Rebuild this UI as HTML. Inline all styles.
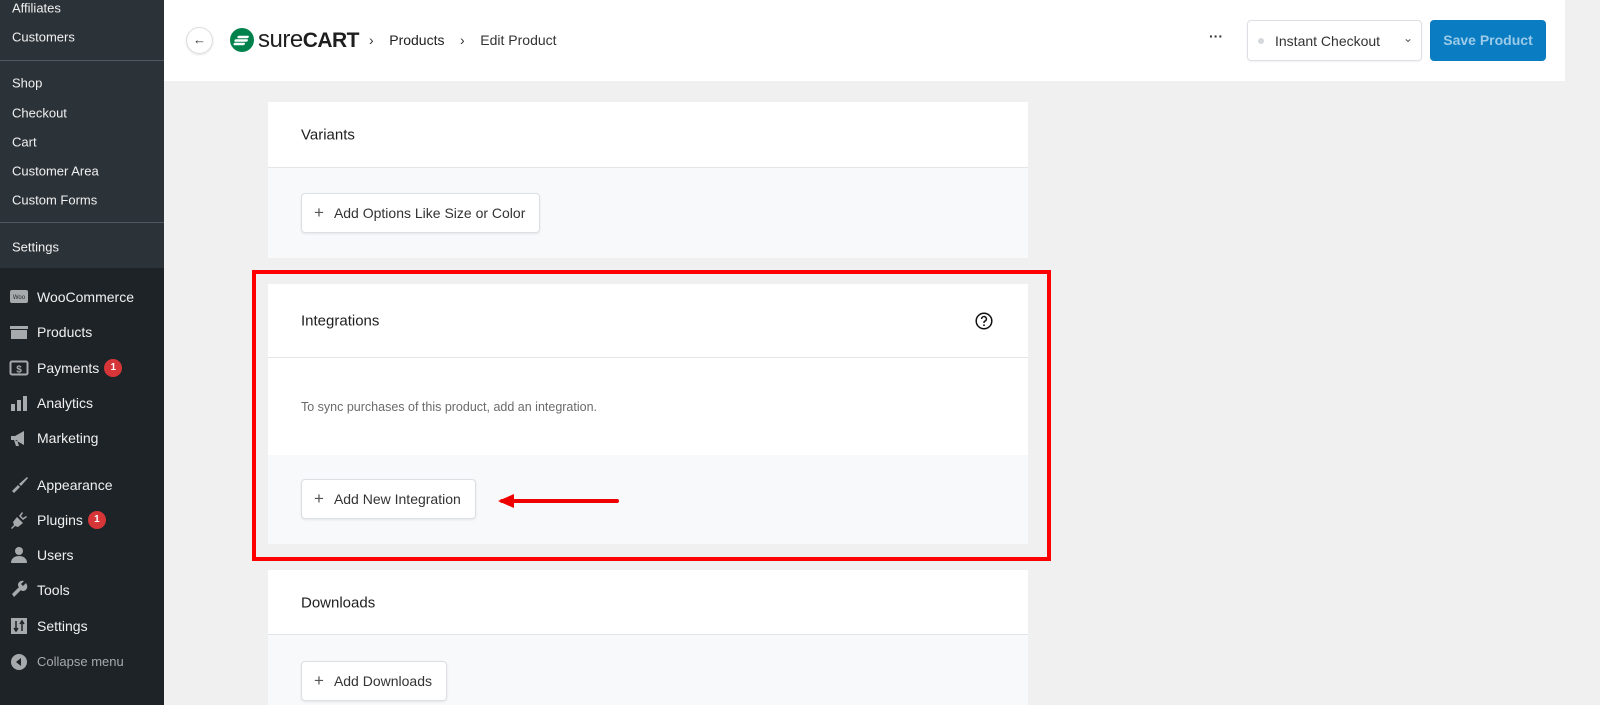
<!DOCTYPE html>
<html><head><meta charset="utf-8"><style>
*{box-sizing:border-box;margin:0;padding:0}
body{width:1600px;height:705px;overflow:hidden;background:#f0f0f1;font-family:"Liberation Sans",sans-serif;position:relative}
.sb{position:absolute;left:0;top:0;width:164px;height:705px;background:#1d2327}
.sbt{position:absolute;left:0;top:0;width:164px;height:268px;background:#2c3338}
.si{position:absolute;left:12px;font-size:13px;color:#f0f0f1;transform:translateY(-50%)}
.sep{position:absolute;left:0;width:164px;height:1px;background:#50575e}
.mi{position:absolute;left:37px;font-size:14px;color:#f0f0f1;transform:translateY(-50%);line-height:18px;display:flex;align-items:center}
.ic{position:absolute;left:9px;width:20px;height:20px;transform:translateY(-50%)}
.badge{display:inline-block;background:#d63638;color:#fff;border-radius:9px;font-size:10px;font-weight:bold;width:18px;height:18px;line-height:18px;text-align:center;margin-left:5px}
.hdr{position:absolute;left:164px;top:0;width:1401px;height:81px;background:#fff}
.card{position:absolute;left:268px;width:760px;background:#fff}
.ch{position:absolute;left:0;right:0;top:0;border-bottom:1px solid #e3e5e8}
.ct{position:absolute;left:33px;font-size:15px;color:#1e1e1e;transform:translateY(-50%)}
.grey{position:absolute;left:0;right:0;background:#f8f9fa}
.btn{position:absolute;left:33px;height:40px;background:#fff;border:1px solid #dcdfe3;border-radius:4px;box-shadow:0 1px 2px rgba(0,0,0,.08);font-size:14px;color:#333;line-height:38px;padding:0 14px 0 12px}
.btn b{font-weight:normal;font-size:17px;margin-right:10px;color:#555}
</style></head><body>
<div class="sb"><div class="sbt"></div>
<div class="si" style="top:8px">Affiliates</div>
<div class="si" style="top:37px">Customers</div>
<div class="sep" style="top:60px"></div>
<div class="si" style="top:83px">Shop</div>
<div class="si" style="top:113px">Checkout</div>
<div class="si" style="top:142px">Cart</div>
<div class="si" style="top:171px">Customer Area</div>
<div class="si" style="top:200px">Custom Forms</div>
<div class="sep" style="top:222px"></div>
<div class="si" style="top:247px">Settings</div>

<svg class="ic" style="top:297px" viewBox="0 0 20 20"><rect x="1" y="3" width="18" height="13" rx="2" fill="#a7aaad"/><text x="10" y="12" font-size="6" text-anchor="middle" fill="#1d2327" font-family="Liberation Sans">Woo</text></svg>
<div class="mi" style="top:297px">WooCommerce</div>
<svg class="ic" style="top:332px" viewBox="0 0 20 20"><rect x="1" y="4" width="18" height="3" fill="#a7aaad"/><rect x="2" y="8" width="16" height="9" fill="#a7aaad"/></svg>
<div class="mi" style="top:332px">Products</div>
<svg class="ic" style="top:368px" viewBox="0 0 20 20"><rect x="1.5" y="3.5" width="17" height="13" rx="1.5" fill="none" stroke="#a7aaad" stroke-width="2"/><text x="10" y="14.5" font-size="10" font-weight="bold" text-anchor="middle" fill="#a7aaad" font-family="Liberation Sans">$</text></svg>
<div class="mi" style="top:368px">Payments<span class="badge">1</span></div>
<svg class="ic" style="top:403px" viewBox="0 0 20 20"><rect x="2" y="11" width="4" height="7" fill="#a7aaad"/><rect x="8" y="7" width="4" height="11" fill="#a7aaad"/><rect x="14" y="3" width="4" height="15" fill="#a7aaad"/></svg>
<div class="mi" style="top:403px">Analytics</div>
<svg class="ic" style="top:438px" viewBox="0 0 20 20"><path d="M2 8h4l9-5v14l-9-5H2z M5 12l2 6h3l-2-6z" fill="#a7aaad"/></svg>
<div class="mi" style="top:438px">Marketing</div>
<svg class="ic" style="top:485px" viewBox="0 0 20 20"><path d="M18 2l-8 7 2 2 7-8z M9 10l-6 6 2 2 6-6z" fill="#a7aaad"/></svg>
<div class="mi" style="top:485px">Appearance</div>
<svg class="ic" style="top:520px" viewBox="0 0 20 20"><path d="M13 2l-3 4 4 4 4-3-1-1-3 2-2-2 2-3z M8 7l-4 5 1 3-3 3 1 1 3-3 3 1 5-4z" fill="#a7aaad"/></svg>
<div class="mi" style="top:520px">Plugins<span class="badge">1</span></div>
<svg class="ic" style="top:555px" viewBox="0 0 20 20"><circle cx="10" cy="6" r="4" fill="#a7aaad"/><path d="M2 18c0-5 4-7 8-7s8 2 8 7z" fill="#a7aaad"/></svg>
<div class="mi" style="top:555px">Users</div>
<svg class="ic" style="top:590px" viewBox="0 0 20 20"><path d="M17 3l-3 3-2-2 3-3c-3-1-6 1-6 4 0 1 0 1 1 2l-7 7 2 3 7-7c1 1 1 1 2 1 3 0 5-3 4-6z" fill="#a7aaad"/></svg>
<div class="mi" style="top:590px">Tools</div>
<svg class="ic" style="top:626px" viewBox="0 0 20 20"><rect x="2" y="2" width="16" height="16" fill="#a7aaad"/><path d="M7 5v10M5 12l2 3 2-3M13 15V5M11 8l2-3 2 3" stroke="#1d2327" stroke-width="1.5" fill="none"/></svg>
<div class="mi" style="top:626px">Settings</div>
<svg class="ic" style="top:662px" viewBox="0 0 20 20"><circle cx="10" cy="10" r="8" fill="#a7aaad"/><path d="M12 6v8l-5-4z" fill="#1d2327"/></svg>
<div class="mi" style="top:662px;font-size:13px;color:#a7aaad">Collapse menu</div>
</div>

<div class="hdr">
<div style="position:absolute;left:22px;top:27px;width:27px;height:27px;border-radius:50%;border:1px solid #dcdcde;box-shadow:0 1px 2px rgba(0,0,0,.1);text-align:center;line-height:24px;font-size:13px;color:#333">←</div>
<svg style="position:absolute;left:66px;top:28px" width="24" height="24" viewBox="0 0 24 24"><circle cx="12" cy="12" r="12" fill="#01824c"/><path d="M8 9h9M6 12.5h11M6 16h9" stroke="#fff" stroke-width="2.4" stroke-linecap="round" transform="skewX(-15) translate(3 0)"/></svg>
<div style="position:absolute;left:94px;top:26px;font-size:24px;color:#1e1e1e;letter-spacing:-0.5px"><span style="font-weight:300">sure</span><span style="font-weight:bold;font-size:21px">CART</span></div>
<div style="position:absolute;left:205px;top:32px;font-size:14px;color:#333">›&nbsp;&nbsp;&nbsp;&nbsp;<span style="color:#1e1e1e">Products</span>&nbsp;&nbsp;&nbsp;&nbsp;›&nbsp;&nbsp;&nbsp;&nbsp;<span style="color:#333">Edit Product</span></div>
<div style="position:absolute;left:1045px;top:28px;font-size:14px;font-weight:bold;color:#333">···</div>
<div style="position:absolute;left:1083px;top:20px;width:175px;height:41px;border:1px solid #dcdfe3;border-radius:4px;box-shadow:0 1px 2px rgba(0,0,0,.06)">
<span style="position:absolute;left:10px;top:17px;width:6px;height:6px;border-radius:50%;background:#d5d8dc"></span>
<span style="position:absolute;left:27px;top:12px;font-size:14px;color:#333">Instant Checkout</span>
<span style="position:absolute;left:155px;top:10px;font-size:12px;color:#555">⌄</span></div>
<div style="position:absolute;left:1266px;top:20px;width:116px;height:41px;border-radius:4px;background:#0a7cc1;color:#9ccbe9;font-size:14px;font-weight:bold;line-height:41px;text-align:center">Save Product</div>
</div>

<div class="card" style="top:102px;height:156px">
<div class="ch" style="height:66px"></div><div class="ct" style="top:33px">Variants</div>
<div class="grey" style="top:66px;bottom:0"></div>
<div class="btn" style="top:91px"><b>+</b>Add Options Like Size or Color</div>
</div>

<div class="card" style="top:284px;height:260px">
<div class="ch" style="height:74px"></div><div class="ct" style="top:37px">Integrations</div>
<svg style="position:absolute;left:707px;top:28px" width="18" height="18" viewBox="0 0 18 18"><circle cx="9" cy="9" r="7.8" fill="none" stroke="#111" stroke-width="1.5"/><path d="M6.6 7a2.4 2.4 0 1 1 3.2 2.2c-.6.3-.8.7-.8 1.4v.4" fill="none" stroke="#111" stroke-width="1.5"/><circle cx="9" cy="13.2" r=".9" fill="#111"/></svg>
<div style="position:absolute;left:33px;top:116px;font-size:12.5px;color:#6b6b6b">To sync purchases of this product, add an integration.</div>
<div class="grey" style="top:171px;bottom:0"></div>
<div class="btn" style="top:195px"><b>+</b>Add New Integration</div>
</div>

<div style="position:absolute;left:252px;top:270px;width:799px;height:291px;border:4px solid #f00"></div>
<svg style="position:absolute;left:498px;top:492px" width="124" height="18"><path d="M4 9H119" stroke="#e00" stroke-width="4" stroke-linecap="round"/><path d="M0 9l16-7v14z" fill="#e00"/></svg>

<div class="card" style="top:570px;height:135px">
<div class="ch" style="height:65px"></div><div class="ct" style="top:33px">Downloads</div>
<div class="grey" style="top:65px;bottom:0"></div>
<div class="btn" style="top:91px"><b>+</b>Add Downloads</div>
</div>
</body></html>
